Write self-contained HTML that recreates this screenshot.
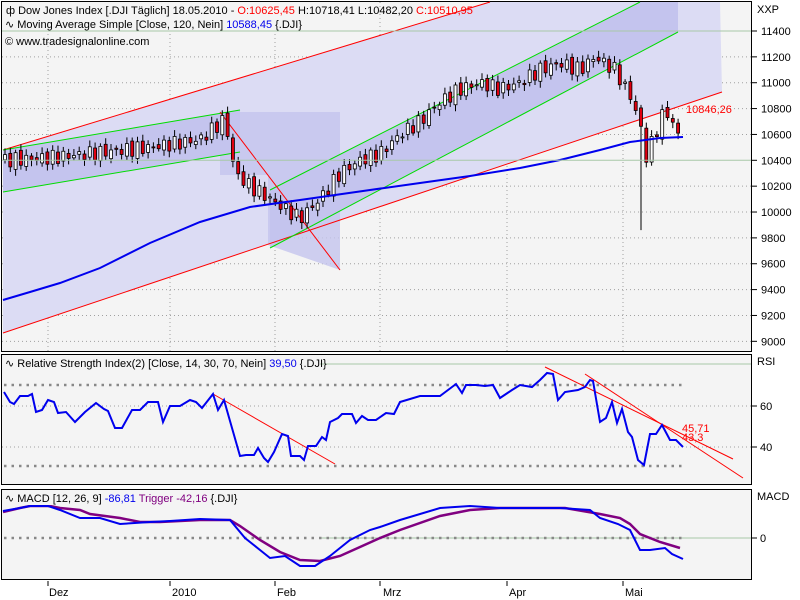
<!DOCTYPE html>
<html><head><meta charset="utf-8"><style>
body{margin:0;background:#fff;width:800px;height:600px;overflow:hidden;font-family:"Liberation Sans",sans-serif}
svg{display:block}
text{font-family:"Liberation Sans",sans-serif;font-size:11px}
</style></head><body>
<svg id="s" width="800" height="600" xmlns="http://www.w3.org/2000/svg">
<rect width="800" height="600" fill="#fff"/>
<rect x="1.5" y="1.5" width="750" height="350" fill="#f4f4f4" stroke="#000"/>
<g id="grid" stroke="#a0a0a0" stroke-dasharray="1,3"></g>
<polygon points="3,150 490,2 720,2 722,92 3,333" fill="#dcdcf4"/>
<polygon points="3,150 240,110 240,152 3,192" fill="#c4c4ee"/>
<polygon points="270,190 640,2 678,2 678,32 270,248" fill="#c4c4ee"/>
<polygon points="220,112 340,112 340,270 268,245 268,175 220,175" fill="#c4c4ee" opacity="0.8"/>
<line x1="3" y1="150" x2="490" y2="2" stroke="red"/>
<line x1="3" y1="333" x2="722" y2="92" stroke="red"/>
<line x1="3" y1="150" x2="240" y2="110" stroke="#00dd00"/>
<line x1="3" y1="192" x2="240" y2="152" stroke="#00dd00"/>
<line x1="270" y1="190" x2="640" y2="2" stroke="#00dd00"/>
<line x1="270" y1="248" x2="678" y2="32" stroke="#00dd00"/>
<line x1="220" y1="112" x2="340" y2="270" stroke="red"/>
<g id="candles"></g>
<polyline fill="none" stroke="#0000ee" stroke-width="2" points="3,300 30,292 60,283 100,268 150,243 200,222 250,207 300,200 370,190 420,183 470,176 520,168 560,160 600,150 630,142 660,138 683,137"/>
<text x="686" y="113" fill="red" font-size="12">10846,26</text>
<rect x="2" y="2" width="292" height="15" fill="#f4f4f4"/>
<rect x="2" y="17" width="292" height="15" fill="#f4f4f4"/>
<text x="6" y="14">ф Dow Jones Index [.DJI  Täglich] 18.05.2010 - <tspan fill="red">O:10625,45</tspan> H:10718,41 L:10482,20 <tspan fill="red">C:10510,95</tspan></text>
<text x="5" y="28">∿ Moving Average Simple [Close, 120, Nein] <tspan fill="#0000ee">10588,45</tspan> {.DJI}</text>
<text x="5" y="45" font-size="10">© www.tradesignalonline.com</text>
<text x="757" y="13" font-size="12">XXP</text>
<g id="pax"></g>
<rect x="1.5" y="354.5" width="750" height="130" fill="#f4f4f4" stroke="#000"/>
<line x1="320" y1="364" x2="751" y2="364" stroke="#a8c8a8"/>
<g stroke="#a0a0a0" stroke-dasharray="1,3"><line x1="2" y1="406" x2="751" y2="406"/><line x1="2" y1="447" x2="751" y2="447"/></g>
<g stroke="#888" stroke-width="2.5" stroke-dasharray="2.5,5"><line x1="4" y1="385" x2="683" y2="385"/><line x1="4" y1="466" x2="683" y2="466"/></g>
<line x1="213" y1="394" x2="335" y2="464" stroke="red"/>
<line x1="545" y1="367" x2="733" y2="459" stroke="red"/>
<line x1="585" y1="374" x2="743" y2="478" stroke="red"/>
<polyline fill="none" stroke="#0000ee" stroke-width="2" points="4,392 10,402 14,404 20,396 28,396 32,394 36,412 42,410 48,400 54,402 58,413 66,412 75,422 85,412 96,403 104,409 108,411 115,428 122,428 132,410 140,410 148,402 158,402 163,422 170,406 180,406 190,400 196,402 202,408 213,394 218,410 224,400 232,428 240,456 246,455 254,455 258,448 264,458 268,462 274,452 282,434 288,436 291,456 300,456 304,460 308,446 316,446 322,437 326,440 330,422 338,418 342,414 352,414 356,423 362,416 368,420 376,420 386,413 394,414 400,402 420,396 440,396 456,384 462,393 466,385 476,385 485,386 493,385 500,398 512,390 520,385 532,387 540,380 547,373 553,374 558,400 565,392 578,390 585,387 590,380 593,381 600,422 606,418 612,402 617,423 622,409 628,432 632,437 638,460 644,465 650,434 656,434 662,425 670,440 676,440 683,447"/>
<text x="682" y="432" fill="red" font-size="12">45,71</text>
<text x="682" y="441" fill="red" font-size="11">43,3</text>
<rect x="2" y="355" width="318" height="15" fill="#f4f4f4"/>
<text x="5" y="367">∿ Relative Strength Index(2) [Close, 14, 30, 70, Nein] <tspan fill="#0000ee">39,50</tspan> {.DJI}</text>
<text x="757" y="365">RSI</text>
<g font-size="11"><line x1="752" y1="406" x2="757" y2="406" stroke="#000"/><text x="760" y="410">60</text><line x1="752" y1="447" x2="757" y2="447" stroke="#000"/><text x="760" y="451">40</text></g>
<rect x="1.5" y="489.5" width="750" height="90" fill="#f4f4f4" stroke="#000"/>
<line x1="320" y1="538" x2="751" y2="538" stroke="#a8c8a8"/>
<line x1="4" y1="538" x2="683" y2="538" stroke="#888" stroke-width="2.5" stroke-dasharray="2.5,5"/>
<polyline fill="none" stroke="#800080" stroke-width="2.5" points="3,512 20,508 30,506 50,506 60,508 80,510 90,514 120,518 140,522 160,522 200,520 230,520 240,526 260,540 280,552 300,560 320,561 340,556 360,547 380,538 400,530 440,516 470,510 500,508 530,508 565,508 600,514 620,518 630,524 640,534 660,542 680,548"/>
<polyline fill="none" stroke="#0000ee" stroke-width="2" points="3,511 20,508 30,506 48,506 60,510 80,518 100,518 120,524 150,522 170,521 200,519 230,520 245,538 260,550 270,558 285,556 300,566 315,566 330,556 350,540 370,530 380,527 400,520 440,508 470,506 500,508 530,508 560,508 590,510 600,518 618,524 630,530 640,550 650,550 665,548 672,554 683,559"/>
<rect x="2" y="490" width="230" height="15" fill="#f4f4f4"/>
<text x="5" y="502">∿ MACD [12, 26, 9] <tspan fill="#0000ee">-86,81</tspan> <tspan fill="#800080">Trigger -42,16</tspan> {.DJI}</text>
<text x="757" y="500">MACD</text>
<line x1="752" y1="538" x2="757" y2="538" stroke="#000"/><text x="760" y="542">0</text>
<g font-size="11"><text x="49" y="596">Dez</text><text x="172" y="596">2010</text><text x="277" y="596">Feb</text><text x="383" y="596">Mrz</text><text x="509" y="596">Apr</text><text x="625" y="596">Mai</text></g>
<g stroke="#000"><line x1="48" y1="581" x2="48" y2="586"/><line x1="170" y1="581" x2="170" y2="586"/><line x1="275" y1="581" x2="275" y2="586"/><line x1="380" y1="581" x2="380" y2="586"/><line x1="507" y1="581" x2="507" y2="586"/><line x1="623" y1="581" x2="623" y2="586"/></g>
</svg>
<script>
var NS="http://www.w3.org/2000/svg";
function el(p,t,a){var e=document.createElementNS(NS,t);for(var k in a)e.setAttribute(k,a[k]);p.appendChild(e);return e;}
var g=document.getElementById('grid'),pax=document.getElementById('pax');
function py(p){return 31+(11400-p)*0.1293;}
[48,170,275,380,507,623].forEach(function(x){el(g,'line',{x1:x,y1:2,x2:x,y2:351});});
for(var p=9000;p<=11400;p+=200){var y=py(p);
 if(p==11400||p==10400) el(document.getElementById('s'),'line',{x1:2,y1:y,x2:751,y2:y,stroke:'#a8c8a8'});
 else el(g,'line',{x1:2,y1:y,x2:751,y2:y});
 el(pax,'line',{x1:752,y1:y,x2:757,y2:y,stroke:'#000'});
 var t=el(pax,'text',{x:761,y:y+4});t.textContent=p;}
var k=[[5,10400],[50,10420],[100,10460],[150,10500],[200,10560],[225,10720],[235,10300],[250,10200],[270,10100],[290,10000],[300,9950],[320,10100],[340,10300],[360,10400],[380,10450],[400,10600],[420,10700],[440,10850],[460,10950],[480,11000],[500,10950],[520,11000],[540,11100],[560,11150],[580,11100],[595,11200],[605,11150],[615,11100],[630,10900],[640,10700],[645,10400],[655,10600],[665,10800],[675,10650],[683,10520]];
function val(x){for(var i=1;i<k.length;i++)if(x<=k[i][0]){var a=k[i-1],b=k[i];return a[1]+(b[1]-a[1])*(x-a[0])/(b[0]-a[0]);}return 10520;}
var c=document.getElementById('candles'),prev=val(5);
for(var x=5;x<=683;x+=5.3){var cl=val(x)+Math.sin(x*1.7)*55,op=prev+Math.sin(x*3.1)*20;
 var hi=Math.max(op,cl)+20+Math.abs(Math.sin(x))*30,lo=Math.min(op,cl)-20-Math.abs(Math.cos(x))*30;
 if(x>636&&x<642){lo=9860;}
 el(c,'line',{x1:x,y1:py(hi),x2:x,y2:py(lo),stroke:'#000'});
 var y1=py(Math.max(op,cl)),h=Math.max(1,py(Math.min(op,cl))-y1);
 el(c,'rect',{x:x-1.5,y:y1,width:3,height:h,fill:cl>=op?'#fff':'#e00010',stroke:'#000','stroke-width':0.8});
 prev=cl;}
</script>
</body></html>
